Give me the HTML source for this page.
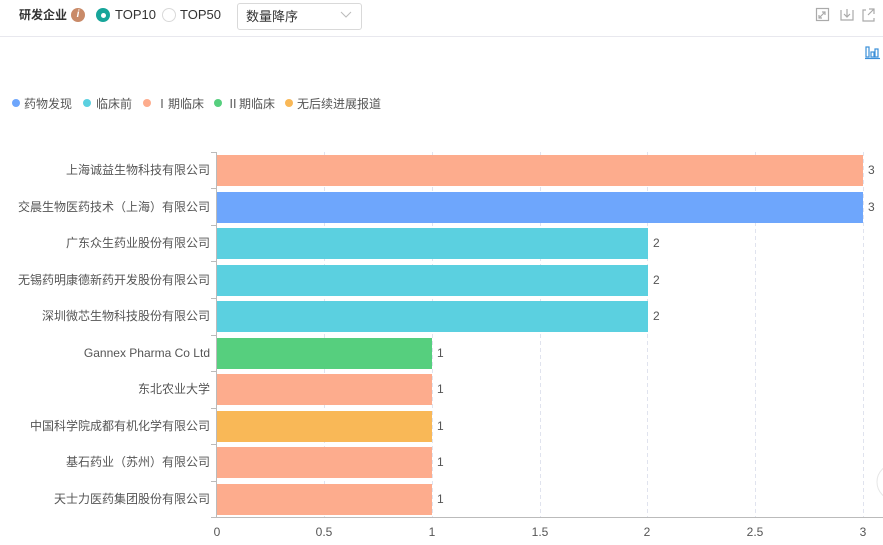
<!DOCTYPE html>
<html><head><meta charset="utf-8"><style>
body{margin:0;width:883px;height:545px;background:#fff;font-family:"Liberation Sans","Noto Sans CJK SC",sans-serif;overflow:hidden;position:relative}
.t{position:absolute;white-space:nowrap}
</style></head><body>
<div class="t" style="left:19px;top:6px;font-size:12px;font-weight:bold;color:#333">研发企业</div>
<div style="position:absolute;left:71px;top:8px;width:14px;height:14px;border-radius:50%;background:#c98a68;color:#fff;font-size:10px;font-style:italic;font-weight:bold;text-align:center;line-height:14px">i</div>
<div style="position:absolute;left:96px;top:8px;width:14px;height:14px;border-radius:50%;background:#17a59a"><div style="position:absolute;left:4.5px;top:4.5px;width:5px;height:5px;background:#fff;border-radius:50%"></div></div>
<div class="t" style="left:115px;top:7px;font-size:13px;color:#333">TOP10</div>
<div style="position:absolute;left:162px;top:8px;width:12px;height:12px;border-radius:50%;border:1px solid #d9d9d9"></div>
<div class="t" style="left:180px;top:7px;font-size:13px;color:#333">TOP50</div>
<div style="position:absolute;left:237px;top:3px;width:123px;height:25px;border:1px solid #d9d9d9;border-radius:3px"></div>
<div class="t" style="left:246px;top:6px;font-size:13px;color:#333">数量降序</div>
<svg style="position:absolute;left:340px;top:11px" width="12" height="8"><path d="M1 1l5 5 5-5" fill="none" stroke="#bbb"/></svg>
<div style="position:absolute;left:0;top:36px;width:883px;height:1px;background:#e8e8ee"></div>
<svg style="position:absolute;left:815px;top:7px" width="68" height="16" fill="none" stroke="#aaa" stroke-width="1.2">
<rect x="1.5" y="1.5" width="12" height="12"/><path d="M4 11l6-6M4 8v3h3M10 8V5H7"/>
<path d="M26 3v10h12V3M32 2v8M29 7l3 3 3-3"/>
<path d="M51 3h-3v11h11v-3M54 2h5v5M59 2l-6 6"/>
</svg>
<svg style="position:absolute;left:864px;top:44px" width="16" height="16" fill="none" stroke="#3a8fd9" stroke-width="1.2"><rect x="2" y="3" width="3" height="10"/><rect x="7" y="8" width="3" height="5"/><rect x="11" y="5" width="3" height="8"/><path d="M1 14.5h15"/></svg>
<div style="position:absolute;left:0;top:95px;font-size:12px;color:#555;white-space:nowrap">
<span style="position:absolute;left:12px;top:4px;width:8px;height:8px;border-radius:50%;background:#6ea6fc"></span><span class="t" style="left:24px;top:0">药物发现</span>
<span style="position:absolute;left:83px;top:4px;width:8px;height:8px;border-radius:50%;background:#5bd0e0"></span><span class="t" style="left:96px;top:0">临床前</span>
<span style="position:absolute;left:143px;top:4px;width:8px;height:8px;border-radius:50%;background:#fdac8d"></span><span class="t" style="left:156px;top:0">Ⅰ期临床</span>
<span style="position:absolute;left:214px;top:4px;width:8px;height:8px;border-radius:50%;background:#56cf7e"></span><span class="t" style="left:227px;top:0">Ⅱ期临床</span>
<span style="position:absolute;left:285px;top:4px;width:8px;height:8px;border-radius:50%;background:#f9b857"></span><span class="t" style="left:297px;top:0">无后续进展报道</span>
</div>
<svg style="position:absolute;left:0;top:0" width="883" height="545" font-family="Liberation Sans,Noto Sans CJK SC,sans-serif" font-size="12" fill="#555">
<g stroke="#e0e3ee" stroke-dasharray="4,3"><path d="M324.5 152v365M432.5 152v365M540.5 152v365M647.5 152v365M755.5 152v365M863.5 152v365"/></g>
<g>
<rect x="217" y="155" width="646" height="31" fill="#fdac8d"/>
<rect x="217" y="192" width="646" height="31" fill="#6ea6fc"/>
<rect x="217" y="228" width="431" height="31" fill="#5bd0e0"/>
<rect x="217" y="265" width="431" height="31" fill="#5bd0e0"/>
<rect x="217" y="301" width="431" height="31" fill="#5bd0e0"/>
<rect x="217" y="338" width="215" height="31" fill="#56cf7e"/>
<rect x="217" y="374" width="215" height="31" fill="#fdac8d"/>
<rect x="217" y="411" width="215" height="31" fill="#f9b857"/>
<rect x="217" y="447" width="215" height="31" fill="#fdac8d"/>
<rect x="217" y="484" width="215" height="31" fill="#fdac8d"/>
</g>
<g stroke="#bbb"><path d="M216.5 152v366M216 517.5h667"/>
<path d="M211 152.5h5M211 188.5h5M211 225.5h5M211 261.5h5M211 298.5h5M211 335.5h5M211 371.5h5M211 408.5h5M211 444.5h5M211 481.5h5M211 517.5h5"/></g>
<g text-anchor="end">
<text x="210" y="174">上海诚益生物科技有限公司</text>
<text x="210" y="211">交晨生物医药技术（上海）有限公司</text>
<text x="210" y="247">广东众生药业股份有限公司</text>
<text x="210" y="284">无锡药明康德新药开发股份有限公司</text>
<text x="210" y="320">深圳微芯生物科技股份有限公司</text>
<text x="210" y="357">Gannex Pharma Co Ltd</text>
<text x="210" y="393">东北农业大学</text>
<text x="210" y="430">中国科学院成都有机化学有限公司</text>
<text x="210" y="466">基石药业（苏州）有限公司</text>
<text x="210" y="503">天士力医药集团股份有限公司</text>
</g>
<text x="868" y="174">3</text><text x="868" y="211">3</text>
<text x="653" y="247">2</text><text x="653" y="284">2</text><text x="653" y="320">2</text>
<text x="437" y="357">1</text><text x="437" y="393">1</text><text x="437" y="430">1</text><text x="437" y="466">1</text><text x="437" y="503">1</text>
<g text-anchor="middle"><text x="217" y="536">0</text><text x="324" y="536">0.5</text><text x="432" y="536">1</text><text x="540" y="536">1.5</text><text x="647" y="536">2</text><text x="755" y="536">2.5</text><text x="863" y="536">3</text></g>
<circle cx="895" cy="482" r="18" fill="#fff" stroke="#e6e6e6"/>
</svg>
</body></html>
